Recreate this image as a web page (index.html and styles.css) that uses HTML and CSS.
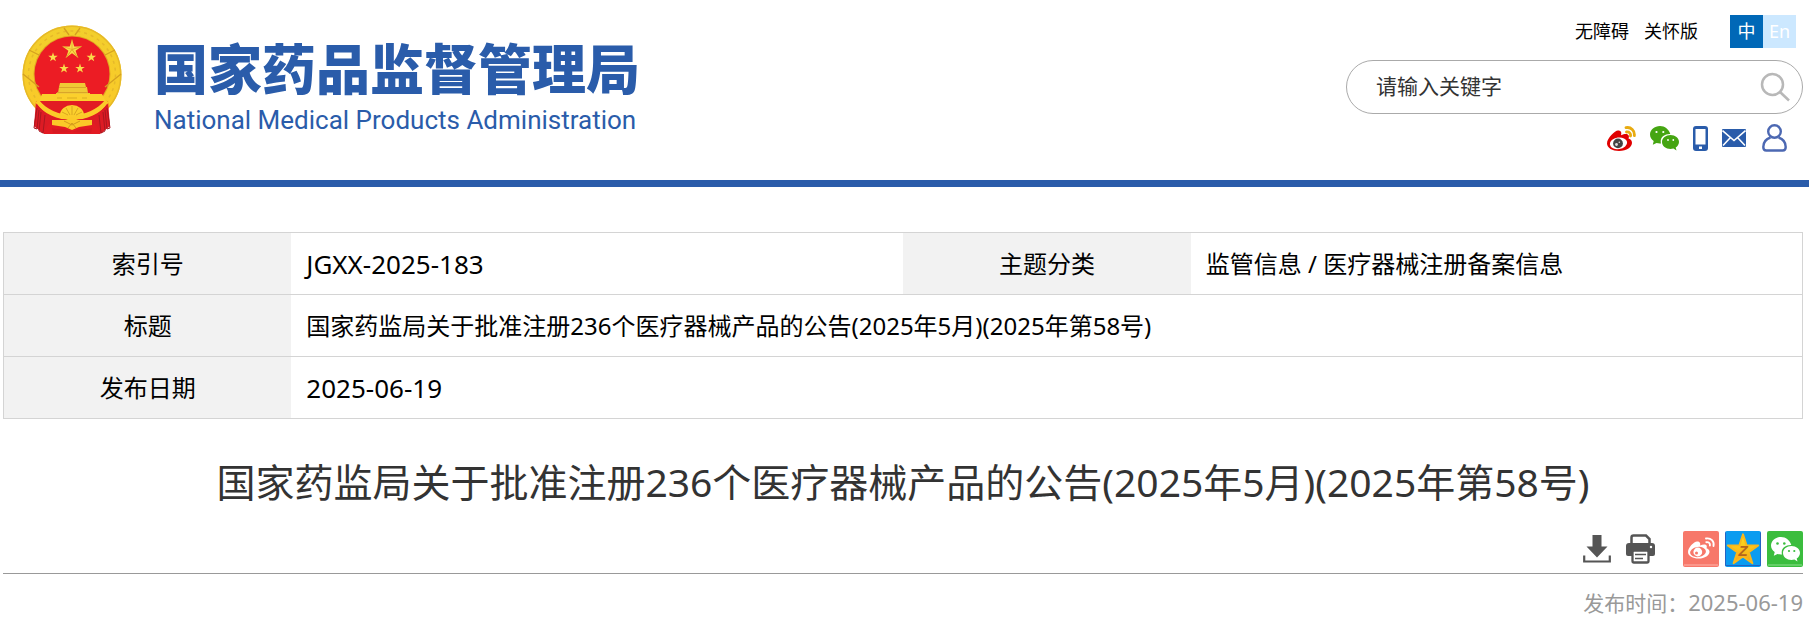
FILE: index.html
```
<!DOCTYPE html>
<html lang="zh-CN">
<head>
<meta charset="utf-8">
<title>国家药品监督管理局</title>
<link rel="stylesheet" href="styles.css">
</head>
<body>
<svg class="defs" aria-hidden="true">
  <defs>
    <path id="star" d="M0-10 2.25-3.09 9.51-3.09 3.63 1.18 5.88 8.09 0 3.82-5.88 8.09-3.63 1.18-9.51-3.09-2.25-3.09Z"/>
    <linearGradient id="gold" x1="0" y1="0" x2="0" y2="1">
      <stop offset="0" stop-color="#f2cf2c"/>
      <stop offset="1" stop-color="#fbc928"/>
    </linearGradient>
    <linearGradient id="zstar" x1="0" y1="0" x2="0" y2="1">
      <stop offset="0" stop-color="#ffe21a"/>
      <stop offset="1" stop-color="#f7a21b"/>
    </linearGradient>
    <g id="wechat">
      <path d="M10 0C4.500 0 0 3.800 0 8.600c0 2.700 1.500 5 3.700 6.500L2.800 18.800l3.700-1.900c1.200.3 2.300.5 3.500.5h1a7 7 0 0 1-.3-2c0-4.300 4-7.300 9-7.300h.6C18.900 3.300 14.900 0 10 0Z"/>
      <path d="M29 16c0-3.900-3.800-7-8.500-7S12 12.100 12 16s3.800 7 8.500 7c1 0 2-.2 2.900-.4l3.100 1.800-.8-2.900c2-1.200 3.300-3.300 3.300-5.500Z"/>
    </g>
  </defs>
</svg>

<header class="site-header">
  <a class="brand" href="#">
    <svg class="emblem" viewBox="0 0 100 109" role="img" aria-label="国徽">
      <circle cx="50" cy="50" r="49.500" fill="url(#gold)"/>
      <circle cx="50" cy="50" r="48.700" fill="none" stroke="#e6b928" stroke-width="1.500"/>
      <circle cx="50" cy="49.500" r="43.500" fill="none" stroke="#e6b92a" stroke-width="1.500" stroke-dasharray="3 4"/>
      <circle cx="50" cy="49" r="38.500" fill="#e0a822"/>
      <circle cx="50" cy="49" r="37.500" fill="#ec1c24"/>
      <path d="M1 49l16 13M99 49 83 62M7 25l10 5M93 25l-10 5M42 3l5 7M58 3l-5 7" stroke="#d4a020" stroke-width="1.300" fill="none"/>
      <g fill="#fadb4a">
        <use href="#star" transform="translate(50 24.500)"/>
        <use href="#star" transform="translate(31 32.300) scale(.5)"/>
        <use href="#star" transform="translate(69.300 32.300) scale(.5)"/>
        <use href="#star" transform="translate(42 43.500) scale(.5)"/>
        <use href="#star" transform="translate(58 43.500) scale(.5)"/>
      </g>
      <path d="M50 14.500V24.500L59.500 21.400 50 24.500 55.900 32.600 50 24.500 44.100 32.600 50 24.500 40.500 21.400" fill="none" stroke="#e0a826" stroke-width=".7"/>
      <path d="M38 58h25l1 4h1l1 6h2v2H34v-2h2l1-6h0Z" fill="#f0c935"/>
      <path d="M37 62.500h27M35 67.500h31" stroke="#d9a52a" stroke-width="1"/>
      <path d="M20 69h60l4 8H17Z" fill="#fbd02c"/>
      <path d="M35 73h5M45 73h10M60 73h5" stroke="#e6b824" stroke-width="1.500"/>
      <path d="M14 76h72l2 25-10 8H22l-10-8Z" fill="#e21b23"/>
      <path d="M17 75c7 9 20 15 33 15s26-6 33-15l4 2c-8 12-23 18-37 18s-29-6-37-18Z" fill="#fbcb29"/>
      <path d="M38 90a12 10 0 0 1 24 0Z" fill="#fbd02c"/>
      <path d="M50 81v9M44 83l4 7M56 83l-4 7M40 87l6 3M60 87l-6 3" stroke="#d9a520"/>
      <path d="M15 79c7 9 13 13 23 15l12 1 12-1c10-2 16-6 23-15l3 22-9 7-6-9H27l-6 9-9-7Z" fill="#dd1b24"/>
      <path d="M30 95h14l6-3 6 3h14v5l-13 2-7 3-7-3-13-2Z" fill="#fbc928"/>
      <path d="M42 96l8 4 8-4M46 103l4-5 4 5" stroke="#d29a1c" fill="none"/>
      <path d="M30 103c5 2 8 0 12 1l8 3 8-3c4-1 7 1 12-1l-1 5-19-1-19 1Z" fill="#d71922"/>
      <path d="M15 83l-3 20 3 1 2-19M19 87l-2 19 4 2 2-18M85 83l3 20-3 1-2-19M81 87l2 19-4 2-2-18" fill="none" stroke="#a91720" stroke-width="1"/>
    </svg>
    <span class="brand-text">
      <span class="brand-cn">国家药品监督管理局</span>
      <span class="brand-en" lang="en">National Medical Products Administration</span>
    </span>
  </a>

  <div class="tools">
    <div class="quick">
      <a href="#">无障碍</a>
      <a href="#">关怀版</a>
      <span class="lang">
        <a class="lang-item current" href="#">中</a><a class="lang-item" href="#" lang="en">En</a>
      </span>
    </div>
    <form class="search">
      <input class="search-input" type="text" placeholder="请输入关键字" aria-label="请输入关键字">
      <button class="search-button" type="button" aria-label="搜索">
        <svg width="30" height="30" viewBox="0 0 30 30" fill="none" stroke="#b8b8b8" stroke-width="2.500">
          <circle cx="12.500" cy="12.500" r="10.500"/><path d="M19.500 19.500l9.500 9"/>
        </svg>
      </button>
    </form>
    <nav class="channels" aria-label="渠道">
      <a href="#" aria-label="微博">
        <svg width="29" height="25" viewBox="0 0 29 25">
          <path d="M11 4.500C8 4.500 0 12 0 17.500 0 22 5.500 25 12 25c8 0 13-4 13-8.200 0-2.500-2-3.700-3.500-4.200.8-2.200.5-3.500-.8-4.200-1.500-.8-4-.3-6.700.8.800-2.400.3-4.700-3-4.700Z" fill="#e00000"/>
          <ellipse cx="11.500" cy="17.300" rx="8.700" ry="5.800" fill="#fff" transform="rotate(-8 11.500 17.300)"/>
          <circle cx="11" cy="17.400" r="4.900" fill="#444"/>
          <circle cx="9.500" cy="18.500" r="1.400" fill="#ddd"/><circle cx="12.300" cy="16.300" r=".8" fill="#ddd"/>
          <path d="M19 1.700c5-1 9 3 8.300 8M19.500 6c2.700-.5 4.500 1.500 4 4" fill="none" stroke="#e8ab10" stroke-width="2.800" stroke-linecap="round"/>
        </svg>
      </a>
      <a href="#" aria-label="微信">
        <svg width="29" height="25" viewBox="0 0 29 25">
          <use href="#wechat" fill="#45a512"/>
          <g fill="#fff"><circle cx="6.500" cy="6" r="1.100"/><circle cx="13.300" cy="6" r="1.100"/><circle cx="18" cy="14" r=".9"/><circle cx="23.300" cy="14" r=".9"/></g>
        </svg>
      </a>
      <a href="#" aria-label="移动客户端">
        <svg width="15" height="25" viewBox="0 0 15 25">
          <rect width="15" height="25" rx="3" fill="#2a5caa"/><rect x="2.500" y="3" width="10" height="15.500" fill="#fff"/><rect x="6" y="20.500" width="3" height="2.500" fill="#fff"/>
        </svg>
      </a>
      <a href="#" aria-label="邮箱">
        <svg width="24" height="18" viewBox="0 0 24 18">
          <rect width="24" height="18" rx="1" fill="#2a5caa"/>
          <path d="M.5 1.500 12 11.500 23.500 1.500M1 16.500l7.500-8M23 16.500l-7.500-8" fill="none" stroke="#fff" stroke-width="1.600"/>
        </svg>
      </a>
      <a class="user" href="#" aria-label="用户">
        <svg width="25" height="28" viewBox="0 0 25 28" fill="none" stroke="#4c68b2" stroke-width="2.400">
          <circle cx="12.500" cy="7.500" r="6.300"/>
          <path d="M8.500 13.500C4 15 1.300 18.500 1.300 23c0 2.500 1 3.500 3 3.500h16.400c2 0 3-1 3-3.500 0-4.500-2.700-8-7.200-9.500"/>
        </svg>
      </a>
    </nav>
  </div>
</header>

<main class="content">
  <table class="meta">
    <colgroup><col class="col-label"><col class="col-value"><col class="col-label"><col class="col-value"></colgroup>
    <tbody>
      <tr><th scope="row">索引号</th><td class="code">JGXX-2025-183</td><th scope="row">主题分类</th><td>监管信息 / 医疗器械注册备案信息</td></tr>
      <tr><th scope="row">标题</th><td colspan="3">国家药监局关于批准注册236个医疗器械产品的公告(2025年5月)(2025年第58号)</td></tr>
      <tr><th scope="row">发布日期</th><td class="code" colspan="3">2025-06-19</td></tr>
    </tbody>
  </table>

  <h1 class="title">国家药监局关于批准注册236个医疗器械产品的公告(2025年5月)(2025年第58号)</h1>

  <div class="actions">
    <div class="file-actions">
      <button type="button" aria-label="下载">
        <svg width="28" height="28" viewBox="0 0 28 28">
          <path d="M9.500 0h9v11.500h6L14 22.500 3.500 11.500h6Z" fill="#555"/>
          <path d="M1.200 20.500v6h25.600v-6" fill="none" stroke="#555" stroke-width="2.200"/>
        </svg>
      </button>
      <button type="button" aria-label="打印">
        <svg width="29" height="30" viewBox="0 0 29 30">
          <path d="M5.500 9.500V3.500q0-2 2-2h12.500l3.500 3.500v4.500" fill="none" stroke="#555" stroke-width="2.500"/>
          <path d="M3 9h23q3 0 3 3v8q0 2-2 2H2q-2 0-2-2v-8q0-3 3-3Z" fill="#555"/>
          <rect x="6.500" y="16.500" width="16" height="12" rx="1.500" fill="#fff" stroke="#555" stroke-width="2.300"/>
          <path d="M9 20.500h11M9 24.500h8" stroke="#555" stroke-width="1.600"/>
          <circle cx="25" cy="13" r="1.200" fill="#fff"/>
        </svg>
      </button>
    </div>
    <div class="share">
      <a href="#" aria-label="分享到微博">
        <svg width="36" height="36" viewBox="0 0 36 36">
          <rect width="36" height="36" rx="2" fill="#f7786a"/><path d="M1 34h34" stroke="#ffb5ac"/>
          <path d="M14 10.500c-3 0-9 6-9 10.500 0 4 5 6.500 10.500 6.500 6.500 0 11-3.300 11-6.800 0-2-1.500-3-3-3.500.7-2 .3-3-.8-3.500-1.400-.6-3.400-.2-5.700.7.700-2 0-3.900-3-3.900Z" fill="#fff"/>
          <ellipse cx="15" cy="21" rx="8" ry="5.100" fill="#f7786a" transform="rotate(-8 15 21)"/>
          <circle cx="14.800" cy="21" r="4.400" fill="#fff"/><circle cx="13.500" cy="22" r="1.500" fill="#f7786a"/>
          <path d="M23 7.500c5-1 8.500 3 7.500 7.500M23.300 11.200c2.500-.4 4 1.200 3.600 3.300" fill="none" stroke="#fff" stroke-width="1.900" stroke-linecap="round"/>
        </svg>
      </a>
      <a href="#" aria-label="分享到QQ空间">
        <svg width="36" height="36" viewBox="0 0 36 36">
          <rect width="36" height="36" rx="2" fill="#0b9cf0"/><path d="M.5 1.500v33h35v-33" stroke="#2363c4" fill="none"/>
          <use href="#star" transform="translate(18 19.300) scale(1.600)" fill="url(#zstar)" stroke="#f9b81c" stroke-width="1.200" stroke-linejoin="round"/>
          <text class="zone-mark" x="18" y="25" text-anchor="middle">Z</text>
        </svg>
      </a>
      <a href="#" aria-label="分享到微信">
        <svg width="36" height="36" viewBox="0 0 36 36">
          <rect width="36" height="36" rx="2" fill="#3bbd3e"/><path d="M1 34h34" stroke="#8fe08f"/>
          <g transform="translate(4 6)">
            <use href="#wechat" fill="#fff"/>
            <g fill="#3bbd3e"><circle cx="6.500" cy="6.500" r="1.300"/><circle cx="13.300" cy="6.500" r="1.300"/><circle cx="18" cy="14" r="1.100"/><circle cx="23.300" cy="14" r="1.100"/></g>
          </g>
        </svg>
      </a>
    </div>
  </div>
  <p class="published">发布时间：<time datetime="2025-06-19">2025-06-19</time></p>
</main>
</body>
</html>
```

FILE: styles.css
```
* {
  box-sizing: border-box;
}

body {
  margin: 0;
  background: #fff;
  color: #000;
  font-family: "Noto Sans", "Noto Sans CJK SC", sans-serif;
  font-size: 24px;
}

a {
  color: inherit;
  text-decoration: none;
}

svg {
  display: block;
}

button {
  padding: 0;
  border: 0;
  background: none;
  cursor: pointer;
}

.defs {
  position: absolute;
  width: 0;
  height: 0;
}

.site-header {
  display: flex;
  justify-content: space-between;
  padding: 15px 6px 28px 22px;
  border-bottom: 7px solid #2a5caa;
}

.brand {
  display: flex;
  align-items: flex-start;
  gap: 32px;
  padding-top: 10px;
  color: #2a5caa;
}

.emblem {
  width: 100px;
  height: 109px;
}

.brand-text {
  display: flex;
  flex-direction: column;
  padding-top: 10px;
  white-space: nowrap;
}

.brand-cn {
  font-family: "Noto Sans CJK SC", sans-serif;
  font-size: 54px;
  font-weight: 900;
  line-height: 64px;
}

.brand-en {
  font-family: Roboto, "Liberation Sans", sans-serif;
  font-size: 26px;
  line-height: 42px;
}

.tools {
  display: flex;
  flex-direction: column;
  width: 457px;
}

.quick {
  display: flex;
  justify-content: flex-end;
  align-items: center;
  gap: 15px;
  padding-right: 7px;
  font-size: 18px;
  line-height: 33px;
}

.lang {
  display: flex;
  margin-left: 17px;
}

.lang-item {
  width: 33px;
  background: #cce8ff;
  color: #fff;
  text-align: center;
}

.lang-item.current {
  background: #0068b7;
}

.search {
  display: flex;
  align-items: center;
  height: 54px;
  margin-top: 12px;
  padding: 0 12px 0 29px;
  border: 1px solid #aaa;
  border-radius: 27px;
}

.search-input {
  flex: 1;
  min-width: 0;
  padding: 0 0 2px;
  border: 0;
  outline: 0;
  background: none;
  color: #333;
  font: 21px/30px "Noto Sans", "Noto Sans CJK SC", sans-serif;
}

.search-input::placeholder {
  color: #333;
  opacity: 1;
}

.channels {
  display: flex;
  justify-content: flex-end;
  align-items: center;
  gap: 14px;
  margin-top: 10px;
  padding-right: 16px;
}

.user {
  margin-left: 2px;
}

.content {
  padding: 45px 6px 0 3px;
}

.meta {
  width: 100%;
  border: 1px solid #d4d4d4;
  border-collapse: collapse;
  table-layout: fixed;
}

.col-label {
  width: 16%;
}

.col-value {
  width: 34%;
}

.meta tr {
  height: 62px;
  border-bottom: 1px solid #d4d4d4;
}

.meta th,
.meta td {
  padding: 0 15px;
  line-height: 36px;
}

.meta th {
  background: #f2f2f2;
  font-weight: 400;
  text-align: center;
}

.meta .code {
  font-size: 26px;
}

.title {
  margin: 36px 0 22px;
  color: #333;
  font-size: 39px;
  font-weight: 400;
  line-height: 54px;
  text-align: center;
}

.actions {
  display: flex;
  justify-content: flex-end;
  align-items: center;
  gap: 28px;
  padding-bottom: 6px;
  border-bottom: 1px solid #999;
}

.file-actions {
  display: flex;
  align-items: center;
  gap: 15px;
}

.share {
  display: flex;
  gap: 6px;
}

.zone-mark {
  fill: #b8641a;
  font: italic 700 15px "Liberation Sans", Arial, sans-serif;
}

.published {
  margin: 13px 0 0;
  color: #999;
  font-size: 21px;
  line-height: 30px;
  text-align: right;
}

.published time {
  font-size: 22px;
}
```
